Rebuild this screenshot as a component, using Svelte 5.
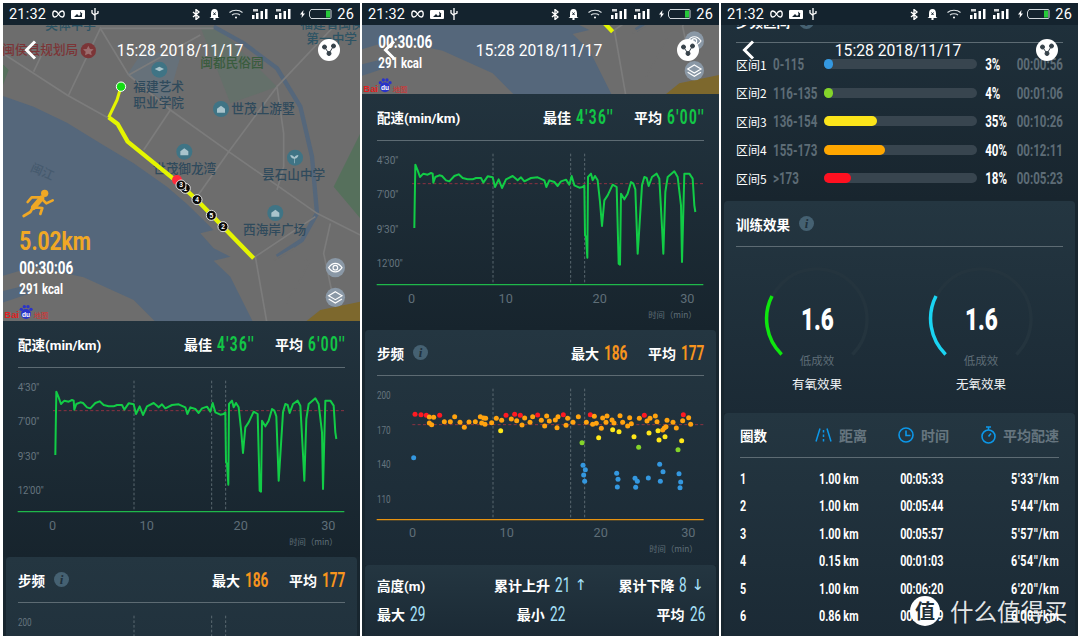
<script lang="ts">
	const pacePoints =
		'165,408 166,340 168,218 175,235 182,255 192,245 205,248 215,243 220,245 222,272 228,255 240,250 248,252 260,265 270,268 285,252 298,247 310,258 325,262 340,262 350,258 365,258 372,272 385,253 400,256 407,285 418,262 428,288 440,262 460,252 475,265 485,256 495,268 515,258 535,256 555,265 561,285 570,265 585,270 595,282 605,268 620,263 630,278 637,252 645,280 660,287 670,285 675,280 677,430 680,435 684,497 686,255 695,245 700,265 707,252 715,265 722,330 728,402 735,325 745,310 760,278 772,285 778,515 782,518 785,305 795,322 805,305 815,270 822,275 828,292 835,485 838,440 848,280 855,255 862,258 868,282 878,255 892,245 900,260 908,405 912,485 918,300 925,255 945,238 955,255 965,340 968,510 975,245 990,245 1000,260 1005,340 1008,360';

	const cadenceDots = [
		{ color: '#ff1a22', pts: [[164,285],[182,286],[198,288],[238,288],[437,288],[463,285],[480,288],[532,287],[609,286],[690,286],[852,288],[969,286]] },
		{ color: '#ffa30f', pts: [[207,293],[220,294],[207,311],[214,316],[252,307],[270,307],[283,292],[299,309],[312,324],[326,308],[345,307],[360,292],[364,311],[370,296],[376,297],[374,315],[394,310],[408,297],[424,303],[453,299],[469,304],[485,317],[493,296],[509,309],[517,292],[543,303],[553,320],[559,290],[567,305],[585,302],[590,325],[593,292],[617,318],[622,297],[638,309],[654,292],[678,309],[697,315],[702,291],[708,312],[723,327],[727,296],[737,309],[740,290],[755,302],[761,311],[779,289],[787,309],[802,320],[808,295],[813,313],[837,297],[860,305],[869,297],[885,290],[890,307],[907,332],[912,326],[917,322],[920,303],[938,309],[948,326],[967,304],[985,295],[991,315]] },
		{ color: '#ffe81a', pts: [[421,334],[715,355],[757,331],[776,337],[821,352],[866,341],[893,334],[896,362],[914,352],[964,364]] },
		{ color: '#84d42a', pts: [[665,370],[835,384],[953,391]] },
		{ color: '#3498e0', pts: [[160,415],[668,438],[675,451],[670,467],[673,486],[769,462],[773,480],[771,503],[824,477],[831,486],[826,504],[864,476],[898,435],[908,457],[900,486],[956,463],[961,488],[959,505]] }
	];

	const zones = [
		{ name: '区间', n: 1, range: '0-115', color: '#3498e0', width: 6.5, pct: '3%', time: '00:00:56' },
		{ name: '区间', n: 2, range: '116-135', color: '#84d42a', width: 6.5, pct: '4%', time: '00:01:06' },
		{ name: '区间', n: 3, range: '136-154', color: '#fbe41a', width: 35, pct: '35%', time: '00:10:26' },
		{ name: '区间', n: 4, range: '155-173', color: '#ffa600', width: 40, pct: '40%', time: '00:12:11' },
		{ name: '区间', n: 5, range: '>173', color: '#ff1020', width: 18, pct: '18%', time: '00:05:23' }
	];

	const laps = [
		['1', '1.00 km', '00:05:33', `5'33''/km`],
		['2', '1.00 km', '00:05:44', `5'44''/km`],
		['3', '1.00 km', '00:05:57', `5'57''/km`],
		['4', '0.15 km', '00:01:03', `6'54''/km`],
		['5', '1.00 km', '00:06:20', `6'20''/km`],
		['6', '0.86 km', '00:05:09', `6'00''/km`]
	];

	const paceHead = [
		{ label: '最佳', value: `4'36''` },
		{ label: '平均', value: `6'00''` }
	];
	const cadenceHead = [
		{ label: '最大', value: '186' },
		{ label: '平均', value: '177' }
	];
</script>

{#snippet statusBar()}
	<div class="status">
		<div class="status-group">
			<span class="clock">21:32</span>
			<svg class="ic" width="13" height="8" viewBox="0 0 13 8" fill="none" stroke="#fff" stroke-width="1.3"><path d="M6.5 4C5 1.5 3.8 1 2.8 1 1.6 1 .8 2.3.8 4s.8 3 2 3c1 0 2.2-.5 3.7-3s2.700-3 3.700-3c1.200 0 2 1.300 2 3s-.8 3-2 3c-1 0-2.200-.5-3.700-3z"/></svg>
			<svg class="ic" width="14" height="9" viewBox="0 0 14 9"><rect width="14" height="9" rx="1" fill="#fff"/><path d="M3 7l3-3 2 2 3-3v4z" fill="#14232e"/><path d="M9 1.500l2.500 2.500-2 .5z" fill="#14232e"/></svg>
			<svg class="ic" width="8" height="12" viewBox="0 0 8 12" fill="none" stroke="#fff" stroke-width="1.300"><path d="M4 0v12M1 2v3l3 2.500M7 3v2l-3 1.500"/></svg>
		</div>
		<div class="status-group right">
			<svg class="ic" width="8" height="11" viewBox="0 0 8 11" fill="none" stroke="#fff" stroke-width="1.400"><path d="M1 3l6 5-3 2.500V.5l3 2.500-6 5"/></svg>
			<svg class="ic" width="11" height="11" viewBox="0 0 11 11"><path d="M5.500 0C8 0 9 2 9 4.500V8l1.500 1h-10L2 8V4.500C2 2 3 0 5.500 0z" fill="#fff"/><circle cx="5.500" cy="10" r="1.200" fill="#fff"/><path d="M4.500 3.500l2 2.500M6.500 3.500l-2 2.500" stroke="#14232e"/></svg>
			<svg class="ic" width="14" height="10" viewBox="0 0 14 10" fill="none" stroke="#dfe4e7" stroke-width="1.100"><path d="M.5 3.500C4 .5 10 .5 13.500 3.500M3 6C5 4.300 9 4.300 11 6"/><circle cx="7" cy="8.500" r="1" fill="#fff" stroke="none"/></svg>
			<svg class="ic" width="16" height="10" viewBox="0 0 16 10" fill="#fff"><rect x="0" y="6" width="2.500" height="4"/><rect x="4" y="4" width="2.500" height="6"/><rect x="8.500" y="2" width="2.500" height="8"/><rect x="13" y="0" width="2.500" height="10"/><rect x="1" y="0" width="5" height="2.500" opacity=".8"/></svg>
			<svg class="ic gap-s" width="16" height="10" viewBox="0 0 16 10" fill="#fff"><rect x="0" y="6" width="2.500" height="4"/><rect x="4" y="4" width="2.500" height="6"/><rect x="8.500" y="2" width="2.500" height="8"/><rect x="13" y="0" width="2.500" height="10"/><rect x="1" y="0" width="5" height="2.500" opacity=".8"/></svg>
			<svg class="ic" width="5" height="8" viewBox="0 0 5 8" fill="#fff"><path d="M3.500 0L0 4.500h2L1.500 8 5 3.500H3z"/></svg>
			<svg class="ic battery" width="23" height="10" viewBox="0 0 23 10" fill="none"><path d="M2 .5h19a1 1 0 0 1 1 1v7a1 1 0 0 1-1 1H2L.5 7V3z" stroke="#cfd6da"/><rect x="17" y="1.500" width="4" height="7" fill="#27c93a"/></svg>
			<span class="clock level">26</span>
		</div>
	</div>
{/snippet}

{#snippet topBar()}
	<div class="topbar">
		<svg width="14" height="20" viewBox="0 0 14 20" fill="none" stroke="#fff" stroke-width="3"><path d="M11 1.500L2.500 10 11 18.500"/></svg>
		<span class="date">15:28 2018/11/17</span>
		<span class="share">
			<svg width="14" height="14" viewBox="0 0 14 14" fill="#37424a" stroke="#37424a" stroke-width="1"><path d="M2.500 4L7 10.500 11.500 3" fill="none"/><circle cx="2.500" cy="4" r="2"/><circle cx="7" cy="10.500" r="2"/><circle cx="11.500" cy="3" r="2"/></svg>
		</span>
	</div>
{/snippet}

{#snippet mapView(viewBox, height)}
	<svg class="map" width="357" {height} {viewBox} preserveAspectRatio="none">
		<rect x="0" y="0" width="1100" height="980" fill="#6d6d6d" />
		<path d="M600 80H650L830 260 690 310Z" fill="#64706a" />
		<path d="M380 225L430 150 540 170 500 310Z" fill="#66717a" />
		<path d="M0 185L25 210 8 255H0Z" fill="#57705d" />
		<path d="M1080 400L1000 560 1080 655Z" fill="#56705c" />
		<path d="M910 970L960 930 1080 905V970Z" fill="#7d682d" />
		<path d="M0 285L100 320 200 368 300 430 400 490 500 560 560 612 640 690 600 700 640 745 690 770 640 782 690 830 760 970H470L400 900 250 832 100 800 0 830Z" fill="#55677b" />
		<path d="M0 875L60 860 90 880 0 910Z" fill="#55677b" />
		<path d="M640 80L730 130 830 205 900 320 935 470 950 640 905 720 830 770" fill="none" stroke="#55677b" stroke-width="13" />
		<path d="M820 780L880 745 925 790 900 840 860 910" fill="none" stroke="#6d6d6d" stroke-width="5" />
		<g fill="none" stroke="#7c7c7c" stroke-width="5">
			<path d="M0 155L200 285 325 355" />
			<path d="M205 285L300 85 385 225" />
			<path d="M100 215L140 130M385 225L600 105" />
			<path d="M385 225L510 330 685 455 950 640 1080 705" />
			<path d="M510 330L430 450M685 455L590 590M685 455L800 300 830 260 850 400 850 500 830 570" />
			<path d="M765 770L945 650M765 770L800 970M990 670L970 760 1000 900" />
			<path d="M300 85H640M830 260L1000 80" />
		</g>
		<text class="mt red" x="6" y="163">闽侯县规划局</text>
		<circle cx="264" cy="152" r="23" fill="#7c3537" />
		<path d="M264 137l5 10 11 1-8 7 2 11-10-5-10 5 2-11-8-7 11-1z" fill="#9b6d6e" />
		<text class="mt teal" x="135" y="88">奥体中学</text>
		<text class="mt teal" x="900" y="84">福建省闽侯</text>
		<text class="mt teal" x="918" y="129">第一中学</text>
		<text class="mt green" x="600" y="202">闽都民俗园</text>
		<text class="mt navy" x="399" y="274">福建艺术</text>
		<text class="mt navy" x="399" y="322">职业学院</text>
		<text class="mt navy" x="693" y="340">世茂上游墅</text>
		<text class="mt navy" x="458" y="519">世茂御龙湾</text>
		<text class="mt navy" x="785" y="536">昙石山中学</text>
		<text class="mt navy" x="728" y="702">西海岸广场</text>
		<text class="mt river" x="88" y="512" transform="rotate(24 88 512)">闽江</text>
		<g fill="#3f7485">
			<circle cx="477" cy="209" r="24" />
			<circle cx="662" cy="327" r="24" />
			<circle cx="552" cy="455" r="24" />
			<circle cx="884" cy="473" r="24" />
			<circle cx="825" cy="639" r="24" />
		</g>
		<g fill="#a9c4cc">
			<path d="M463 207l14-7 14 7-14 7z" />
			<path d="M650 338v-12l12-9 12 9v12z" />
			<path d="M540 466v-12l12-9 12 9v12z" />
			<path d="M813 650v-12l12-9 12 9v12z" />
			<path d="M881 490v-14c-8 0-11-7-11-11 6 0 10 3 12 7 2-4 6-7 12-7 0 4-3 11-11 11v14z" />
		</g>
		<polyline class="route thin" points="362,260 350,300 325,352" />
		<polyline class="route" points="325,352 352,372 382,425 530,545 590,600 760,775" />
		<circle cx="362" cy="260" r="14" fill="#12dd12" stroke="#fff" stroke-width="3" />
		<circle cx="530" cy="540" r="15" fill="#ff2c3c" />
		{#each [[555, 565, '1'], [542, 555, '3'], [590, 599, '4'], [633, 646, '5'], [668, 680, '2']] as [cx, cy, label]}
			<circle {cx} {cy} r="15" fill="#0c0c0c" stroke="#fff" stroke-width="2.500" />
			<text class="pin" x={cx} y={Number(cy) + 7}>{label}</text>
		{/each}
		<g class="runner">
			<circle cx="133" cy="580" r="11" fill="#f0a825" stroke="none" />
			<path d="M124 594L100 622" stroke-width="16" />
			<path d="M122 592H94L82 606M122 594L138 610 157 601M100 622L126 624 120 642M98 622L90 636 70 648" stroke-width="8" />
		</g>
		<text class="km" x="57" y="750" textLength="215" lengthAdjust="spacingAndGlyphs">5.02km</text>
		<text class="dur" x="57" y="823" textLength="162" lengthAdjust="spacingAndGlyphs">00:30:06</text>
		<text class="kcal" x="57" y="883" textLength="131" lengthAdjust="spacingAndGlyphs">291 kcal</text>
		<circle cx="1005" cy="803" r="29" fill="#8a98a6" />
		<circle cx="1005" cy="892" r="29" fill="#8a98a6" />
		<g fill="none" stroke="#fff" stroke-width="3.500">
			<path d="M985 803c12-17 28-17 40 0-12 17-28 17-40 0z" />
			<circle cx="1005" cy="803" r="7" />
			<path d="M1005 875l20 12-20 12-20-12zM985 897l20 12 20-12" />
		</g>
		<text class="bai" x="12" y="955" textLength="44" lengthAdjust="spacingAndGlyphs">Bai</text>
		<g fill="#2a33c9">
			<circle cx="77" cy="942" r="15" />
			<circle cx="63" cy="928" r="5" />
			<circle cx="72" cy="920" r="5" />
			<circle cx="83" cy="920" r="5" />
			<circle cx="92" cy="928" r="5" />
		</g>
		<text class="du" x="77" y="951">du</text>
		<text class="ditu" x="100" y="955">地图</text>
	</svg>
{/snippet}

{#snippet head(title, info, items)}
	<div class="head">
		<span class="title">{title}</span>
		{#if info}
			<span class="info">i</span>
		{/if}
		{#if items}
			<div class="head-stats">
				{#each items as item}
					<span class="stat">{item.label}<b class={info ? 'orange' : 'lime'}>{item.value}</b></span>
				{/each}
			</div>
		{/if}
	</div>
{/snippet}

{#snippet paceChart()}
	<svg class="chart" width="357" height="189" viewBox="8 147 1071 567">
		{#each [[216, `4'30''`, 65], [319, `7'00''`, 65], [422, `9'30''`, 65], [526, `12'00''`, 78]] as [y, label, len]}
			<text class="yl" x="52" {y} textLength={len} lengthAdjust="spacingAndGlyphs">{label}</text>
		{/each}
		<path class="vline" d="M401 185V578M634 185V578M676 185V578" />
		<path class="avg" d="M158 275H1032" />
		<polyline class="pace" points={pacePoints} />
		<path d="M52 578H1032" stroke="#1fb84a" stroke-width="3.500" />
		{@render xLabels(632, 678)}
	</svg>
{/snippet}

{#snippet cadenceChart()}
	<svg class="chart" width="357" height="189" viewBox="5 170 1071 567">
		{#each [[240, '200'], [343, '170'], [446, '140'], [550, '110']] as [y, label]}
			<text class="yl" x="50" {y} textLength="41" lengthAdjust="spacingAndGlyphs">{label}</text>
		{/each}
		<path class="vline" d="M398 208V601M631 208V601M673 208V601" />
		<path class="avg" d="M156 316H1030" />
		{#each cadenceDots as group}
			{#each group.pts as [cx, cy]}
				<circle {cx} {cy} r="7.500" fill={group.color} />
			{/each}
		{/each}
		<path d="M49 601H1030" stroke="#e8920f" stroke-width="3.500" />
		{@render xLabels(654, 699)}
	</svg>
{/snippet}

{#snippet xLabels(y, unitY)}
	<g class="xl">
		<text x="157" {y}>0</text>
		<text x="439" {y}>10</text>
		<text x="721" {y}>20</text>
		<text x="984" {y}>30</text>
	</g>
	<text class="unit" x="1012" y={unitY}>时间（min）</text>
{/snippet}

<div class="page">
	<!-- first phone: map on top -->
	<section class="phone">
		{@render statusBar()}
		{@render topBar()}
		{@render mapView('8 75 1071 888', 296)}
		<div class="card flat pace-card">
			{@render head('配速(min/km)', false, paceHead)}
			{@render paceChart()}
		</div>
		<div class="card">
			{@render head('步频', true, cadenceHead)}
			{@render cadenceChart()}
		</div>
	</section>

	<!-- second phone: scrolled down a little -->
	<section class="phone">
		{@render statusBar()}
		{@render topBar()}
		{@render mapView('8 755 1071 207', 69)}
		<div class="card flat pace-card">
			{@render head('配速(min/km)', false, paceHead)}
			{@render paceChart()}
		</div>
		<div class="card">
			{@render head('步频', true, cadenceHead)}
			{@render cadenceChart()}
		</div>
		<div class="card altitude">
			<div class="alt-row">
				<span class="title">高度(m)</span>
				<span class="alt">累计上升<b>21</b><i>↑</i></span>
				<span class="alt end">累计下降<b class="one">8</b><i>↓</i></span>
			</div>
			<div class="alt-row">
				<span class="alt">最大<b>29</b></span>
				<span class="alt">最小<b>22</b></span>
				<span class="alt end">平均<b>26</b></span>
			</div>
		</div>
	</section>

	<!-- third phone: zones, training effect and laps -->
	<section class="phone">
		{@render statusBar()}
		{@render topBar()}
		<div class="zones-card">
			<div class="head zones-head">
				<span class="title">步频区间</span>
				<span class="info">i</span>
			</div>
			{#each zones as z}
				<div class="zone">
					<span class="zone-name">{z.name}{z.n}</span>
					<span class="zone-range">{z.range}</span>
					<span class="track"><span class="fill" style="width:{z.width}%;background:{z.color}"></span></span>
					<span class="zone-pct">{z.pct}</span>
					<span class="zone-time">{z.time}</span>
				</div>
			{/each}
		</div>
		<div class="card effect">
			{@render head('训练效果', true, null)}
			<div class="gauges">
				{#each [['#0ee60e', '有氧效果'], ['#1ad4f2', '无氧效果']] as [color, label]}
					<div class="gauge">
						<div class="dial">
							<svg width="108" height="108" viewBox="0 0 108 108" fill="none" stroke-width="3.500">
								<path d="M18.600 89.400A50 50 0 1 1 89.400 89.400" stroke="#24343e" />
								<path d="M18.600 89.400A50 50 0 0 1 9 31" stroke={color} />
							</svg>
							<b class="dial-value">1.6</b>
							<span class="dial-note">低成效</span>
						</div>
						<span class="gauge-label">{label}</span>
					</div>
				{/each}
			</div>
		</div>
		<div class="card laps">
			<div class="lap-grid lap-head">
				<span class="title">圈数</span>
				<span class="lap-col">
					<svg width="17" height="14" viewBox="0 0 17 14" fill="none" stroke="#0c97e8" stroke-width="1.500"><path d="M5 .5L1 13.500M12 .5l4 13M8.500 2v2.500M8.500 6.500V9M8.500 11v2.500" /></svg>
					距离
				</span>
				<span class="lap-col">
					<svg width="16" height="16" viewBox="0 0 16 16" fill="none" stroke="#0c97e8" stroke-width="1.600"><circle cx="8" cy="8" r="7" /><path d="M8 3.500V8.500H12.500" /></svg>
					时间
				</span>
				<span class="lap-col end">
					<svg width="15" height="18" viewBox="0 0 15 18" fill="none" stroke="#0c97e8" stroke-width="1.600"><circle cx="7.500" cy="10.500" r="6.500" /><path d="M5 1h5M7.500 1v3M7.500 10.500l2.500-3" /></svg>
					平均配速
				</span>
			</div>
			{#each laps as [n, dist, time, pace]}
				<div class="lap-grid lap-row">
					<span>{n}</span>
					<span class="dist">{dist}</span>
					<span class="time">{time}</span>
					<span class="end">{pace}</span>
				</div>
			{/each}
		</div>
		<div class="mark">
			<span class="mark-badge">值</span>
			<span>什么值得买</span>
		</div>
	</section>
</div>

<style>
	:global(body) {
		background: #fff;
	}

	.page {
		display: grid;
		grid-template-columns: repeat(3, 357px);
		gap: 2px;
		width: 1080px;
		height: 639px;
		padding: 3px 0 3px 3px;
		box-sizing: border-box;
		font-family: Roboto, 'Noto Sans CJK SC', sans-serif;
		color: #fff;
		overflow: hidden;
	}

	.phone {
		position: relative;
		height: 633px;
		overflow: hidden;
		background: #18262f;
		display: flex;
		flex-direction: column;
	}

	.status {
		flex: none;
		position: relative;
		z-index: 2;
		height: 22px;
		background: #14232e;
		display: flex;
		align-items: center;
		justify-content: space-between;
		padding: 0 6px;
	}

	.status-group {
		display: flex;
		align-items: center;
		gap: 6px;
	}

	.status-group.right {
		gap: 9px;
	}

	.gap-s {
		margin-left: -2px;
	}

	.battery {
		margin-left: -5px;
	}

	.clock {
		font-family: Roboto, sans-serif;
		font-size: 14.5px;
		font-weight: 400;
		letter-spacing: 0.2px;
	}

	.level {
		margin-left: -4px;
	}

	.ic {
		display: block;
		flex: none;
	}

	.topbar {
		position: absolute;
		top: 36px;
		left: 21px;
		right: 20px;
		z-index: 3;
		height: 22px;
		display: flex;
		align-items: center;
		justify-content: space-between;
	}

	.date {
		position: absolute;
		left: 0;
		right: 4px;
		text-align: center;
		font-family: Roboto, sans-serif;
		font-size: 15.700px;
	}

	.share {
		width: 22px;
		height: 22px;
		border-radius: 50%;
		background: #fff;
		display: flex;
		align-items: center;
		justify-content: center;
	}

	.map {
		flex: none;
		display: block;
	}

	.mt {
		font-size: 38px;
		font-weight: 500;
		font-family: 'Noto Sans CJK SC', sans-serif;
	}

	.mt.red { fill: #7c3537; }
	.mt.teal { fill: #2c5364; }
	.mt.green { fill: #3a5c3e; }
	.mt.navy { fill: #2f4a5c; }
	.mt.river { fill: #465a6e; font-size: 36px; }

	.route {
		fill: none;
		stroke: #e4f500;
		stroke-width: 13;
		stroke-linejoin: round;
	}

	.route.thin {
		stroke-width: 9;
	}

	.pin {
		fill: #fff;
		font-family: 'Liberation Sans', sans-serif;
		font-size: 20px;
		font-weight: 700;
		text-anchor: middle;
	}

	.runner path {
		fill: none;
		stroke: #f0a825;
		stroke-linecap: round;
		stroke-linejoin: round;
	}

	.km,
	.dur,
	.kcal {
		font-family: Roboto, sans-serif;
		font-weight: 700;
		fill: #fff;
	}

	.km {
		font-size: 78px;
		fill: #f0a825;
	}

	.dur { font-size: 54px; }
	.kcal { font-size: 44px; }

	.bai,
	.du {
		font-family: 'Liberation Sans', sans-serif;
		font-weight: 700;
	}

	.bai {
		font-size: 28px;
		fill: #e02020;
	}

	.du {
		font-size: 20px;
		fill: #fff;
		text-anchor: middle;
	}

	.ditu {
		font-size: 22px;
		fill: #d93030;
		font-family: 'Noto Sans CJK SC', sans-serif;
	}

	.card {
		flex: none;
		margin: 0 3px;
		border-radius: 4px 4px 0 0;
		background: linear-gradient(#243641, #1b2a35);
	}

	.card.flat {
		margin: 0;
		border-radius: 0;
		background: linear-gradient(#22333e, #17242d);
	}

	.pace-card {
		height: 236px;
	}

	.head {
		display: flex;
		align-items: center;
		height: 45px;
		margin: 0 12px;
		border-bottom: 1px solid #5d6b73;
	}

	.pace-card .head {
		height: 46px;
		margin: 0 15px;
	}

	.title {
		font-size: 13.500px;
		font-weight: 700;
		white-space: nowrap;
	}

	.info {
		width: 15px;
		height: 15px;
		margin-left: 9px;
		border-radius: 50%;
		background: #456172;
		color: #1f303b;
		font-family: 'Liberation Serif', serif;
		font-style: italic;
		font-weight: 700;
		font-size: 13px;
		line-height: 15px;
		text-align: center;
	}

	.head-stats {
		margin-left: auto;
		display: flex;
		gap: 21px;
	}

	.stat {
		display: flex;
		align-items: center;
		gap: 5px;
		font-size: 14px;
		font-weight: 700;
		white-space: nowrap;
	}

	/* the DIN-like digits of the app: Roboto squeezed to its width */
	.stat b,
	.alt b {
		display: block;
		font-size: 20px;
		transform: scaleX(0.68);
		transform-origin: 0 50%;
	}

	.stat b {
		width: 23px;
		font-weight: 700;
	}

	.lime {
		color: #12c746;
		letter-spacing: 2px;
	}

	.stat b.lime {
		width: 37px;
	}

	.orange {
		color: #f7941d;
	}

	.chart {
		display: block;
		margin-left: -3px;
	}

	.pace-card .chart {
		margin-left: 0;
	}

	.yl {
		font-family: Roboto, sans-serif;
		font-size: 31px;
		fill: #66757f;
	}

	.vline {
		fill: none;
		stroke: #66737b;
		stroke-width: 2.500;
		stroke-dasharray: 8 6;
	}

	.avg {
		fill: none;
		stroke: #a33343;
		stroke-width: 2.500;
		stroke-dasharray: 9 7;
	}

	.pace {
		fill: none;
		stroke: #12cc46;
		stroke-width: 6;
		stroke-linejoin: round;
	}

	.xl text {
		font-family: Roboto, sans-serif;
		font-size: 38px;
		fill: #5f6e78;
		text-anchor: middle;
	}

	.unit {
		font-family: 'Noto Sans CJK SC', sans-serif;
		font-size: 25px;
		fill: #5f6e78;
		text-anchor: end;
	}

	.altitude {
		height: 71px;
		padding: 5px 12px 0;
		box-sizing: border-box;
	}

	.alt-row {
		display: grid;
		grid-template-columns: 1fr auto 1fr;
		align-items: center;
		height: 29px;
	}

	.alt {
		display: flex;
		align-items: center;
		gap: 5px;
		font-size: 14px;
		font-weight: 700;
		white-space: nowrap;
	}

	.alt.end {
		justify-self: end;
	}

	.alt b {
		width: 14.500px;
		font-weight: 400;
		color: #a9e2fb;
	}

	.alt b.one {
		width: 7px;
	}

	.alt i {
		font-family: 'DejaVu Sans', sans-serif;
		font-style: normal;
		font-weight: 400;
		font-size: 15px;
		color: #a9e2fb;
	}

	.zones-card {
		flex: none;
		height: 175px;
		background: linear-gradient(#1f303b, #18252e);
		overflow: hidden;
	}

	.zones-head {
		height: 42px;
		margin: -25px 15px 7px;
	}

	.zone {
		display: grid;
		grid-template-columns: 37px 50.500px 153.500px 32px 1fr;
		align-items: center;
		height: 28.500px;
		padding: 0 15px;
	}

	.zone-name {
		font-size: 12px;
		font-family: 'Noto Sans CJK SC', sans-serif;
		white-space: nowrap;
	}

	.zone-range,
	.zone-pct,
	.zone-time {
		font-size: 17px;
		font-weight: 700;
		white-space: nowrap;
		transform: scaleX(0.68);
		transform-origin: 0 50%;
	}

	.zone-range,
	.zone-time {
		color: #5d6c76;
	}

	.zone-time {
		margin-left: -20px;
		text-align: right;
		transform-origin: 100% 50%;
	}

	.track {
		display: block;
		height: 10px;
		border-radius: 5px;
		background: #38454f;
	}

	.fill {
		display: block;
		height: 100%;
		border-radius: 5px;
	}

	.zone-pct {
		padding-left: 12px;
	}

	.effect {
		height: 212px;
		margin-top: 1px;
	}

	.gauges {
		display: flex;
		gap: 56px;
		padding: 18px 0 0 39px;
	}

	.gauge {
		display: flex;
		flex-direction: column;
		align-items: center;
	}

	.dial {
		display: grid;
		width: 108px;
		height: 108px;
		justify-items: center;
	}

	.dial > * {
		grid-area: 1 / 1;
	}

	.dial-value {
		align-self: center;
		font-size: 32px;
		font-weight: 900;
		line-height: 1;
		transform: scaleX(0.7);
	}

	.dial-note {
		align-self: end;
		padding-bottom: 5px;
		font-size: 11.500px;
		color: #5d6c76;
		font-family: 'Noto Sans CJK SC', sans-serif;
	}

	.gauge-label {
		margin-top: 1px;
		font-size: 12.500px;
		color: #eef2f4;
		font-family: 'Noto Sans CJK SC', sans-serif;
	}

	.laps {
		flex: none;
		height: 223px;
		padding: 0 16px;
	}

	.lap-grid {
		display: grid;
		grid-template-columns: 75px 83px 1fr 1fr;
		align-items: center;
	}

	.lap-head {
		height: 44px;
		border-bottom: 1px solid #5d6b73;
	}

	.lap-col {
		display: flex;
		align-items: center;
		gap: 7px;
		font-size: 14px;
		font-weight: 700;
		color: #66757f;
		white-space: nowrap;
	}

	.lap-col.end {
		justify-content: flex-end;
	}

	.lap-row {
		height: 27.500px;
		font-size: 15px;
		font-weight: 700;
		white-space: nowrap;
	}

	.lap-row span {
		transform: scaleX(0.72);
		transform-origin: 0 50%;
	}

	.lap-head + .lap-row {
		margin-top: 7px;
	}

	.lap-row .dist {
		padding-left: 5.500px;
	}

	.lap-row .time {
		padding-left: 3px;
	}

	.lap-row .end {
		text-align: right;
		letter-spacing: 0.9px;
		transform-origin: 100% 50%;
	}

	.mark {
		position: absolute;
		top: 593px;
		left: 189px;
		display: flex;
		align-items: center;
		gap: 10px;
		font-family: 'Noto Sans CJK SC', sans-serif;
		font-size: 23.500px;
		line-height: 30px;
		color: rgba(255, 255, 255, 0.9);
		white-space: nowrap;
	}

	.mark-badge {
		width: 30px;
		height: 30px;
		border-radius: 50%;
		background: #fff;
		color: #1f2d36;
		font-size: 20px;
		font-weight: 700;
		text-align: center;
	}
</style>
